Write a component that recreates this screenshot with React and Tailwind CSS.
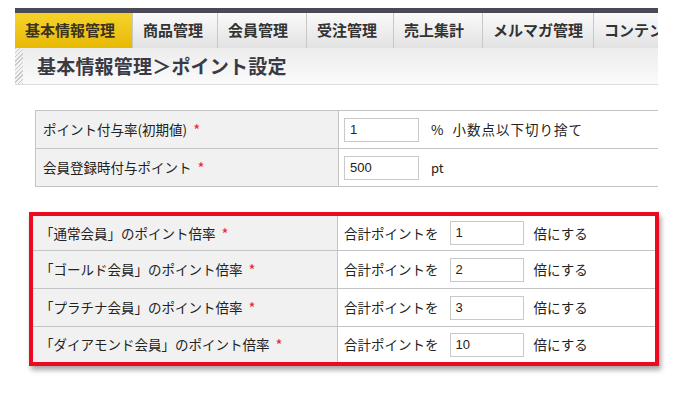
import React from 'react';

const FONT = { fontFamily: '"Noto Sans CJK JP", "Liberation Sans", sans-serif' };

const TABS = [
  { label: '基本情報管理', w: 'w-[117px]', active: true },
  { label: '商品管理', w: 'w-[85px]' },
  { label: '会員管理', w: 'w-[89px]' },
  { label: '受注管理', w: 'w-[87px]' },
  { label: '売上集計', w: 'w-[89px]' },
  { label: 'メルマガ管理', w: 'w-[111px]' },
  { label: 'コンテンツ管理', w: 'w-[110px]' },
];

const RANKS = [
  { name: '通常会員', value: '1', h: 'h-[34px]' },
  { name: 'ゴールド会員', value: '2', h: 'h-[38px]' },
  { name: 'プラチナ会員', value: '3', h: 'h-[38px]' },
  { name: 'ダイアモンド会員', value: '10', h: 'h-[36px]' },
];

function Req() {
  return <span className="ml-[6px] text-[15px] leading-none text-[#e8283a]">*</span>;
}

function TextBox({ value, className = '' }) {
  return (
    <div
      className={`flex items-center h-[24px] border border-[#c9c9c9] bg-white px-[5px] text-[13px] text-[#222] ${className}`}
      style={{ fontFamily: '"Liberation Sans", Arial, sans-serif' }}
    >
      {value}
    </div>
  );
}

export default function App() {
  return (
    <div className="w-[680px] h-[395px] overflow-hidden bg-white text-[#222]" style={FONT}>
      <div className="ml-[15px] w-[643px] pt-[8px]">
        <div className="h-[5px] bg-[#4a4a57]" />

        {/* main tabs */}
        <div className="flex h-[35px] overflow-hidden">
          {TABS.map((t) => (
            <div
              key={t.label}
              className={`${t.w} shrink-0 flex items-center pl-[10px] text-[15px] font-bold whitespace-nowrap ${
                t.active
                  ? 'bg-gradient-to-b from-[#f6d32a] to-[#e7b900] text-[#3a3320]'
                  : 'bg-gradient-to-b from-[#fafafa] to-[#e2e2e2] border-l border-[#c7c7c7] text-[#333]'
              }`}
            >
              {t.label}
            </div>
          ))}
        </div>

        {/* page title */}
        <div className="flex h-[37px] border-b border-[#dcdcdc] bg-gradient-to-b from-[#ececec] to-[#fbfbfb]">
          <div className="w-[8px] bg-[repeating-linear-gradient(135deg,#c9c9c9_0,#c9c9c9_1px,#f2f2f2_1px,#f2f2f2_3px)]" />
          <h1 className="pl-[14px] flex items-center text-[19px] font-bold text-[#3a3a44] tracking-[0.2px]">
            基本情報管理＞ポイント設定
          </h1>
        </div>

        {/* basic point settings */}
        <div className="ml-[20px] mt-[25px] border-l border-[#c4c4c4] text-[13.5px]">
          <div className="flex h-[38px] border-t border-[#c4c4c4]">
            <div className="w-[303px] shrink-0 flex items-center pl-[7px] bg-[#f1f1f1] border-r border-[#c4c4c4]">
              ポイント付与率(初期値)<Req />
            </div>
            <div className="flex items-center pl-[5px]">
              <TextBox value="1" className="w-[75px]" />
              <span className="ml-[12px]">%</span>
              <span className="ml-[9px] tracking-[1px]">小数点以下切り捨て</span>
            </div>
          </div>
          <div className="flex h-[39px] border-y border-[#c4c4c4]">
            <div className="w-[303px] shrink-0 flex items-center pl-[7px] bg-[#f1f1f1] border-r border-[#c4c4c4]">
              会員登録時付与ポイント<Req />
            </div>
            <div className="flex items-center pl-[5px]">
              <TextBox value="500" className="w-[75px]" />
              <span className="ml-[12px] text-[13px]">pt</span>
            </div>
          </div>
        </div>

        {/* rank multipliers */}
        <div className="ml-[14px] mt-[25px] w-[630px] border-4 border-[#ee0a1e] shadow-[2px_4px_5px_rgba(0,0,0,0.35)] text-[13.5px]">
          {RANKS.map((r, i) => (
            <div key={r.name} className={`flex ${r.h} ${i > 0 ? 'border-t border-[#c4c4c4]' : ''}`}>
              <div className="w-[305px] shrink-0 flex items-center pl-[7px] bg-[#f1f1f1] border-r border-[#c4c4c4]">
                「{r.name}」のポイント倍率<Req />
              </div>
              <div className="flex items-center pl-[6px]">
                <span>合計ポイントを</span>
                <TextBox value={r.value} className="ml-[11px] w-[74px]" />
                <span className="ml-[10px]">倍にする</span>
              </div>
            </div>
          ))}
        </div>
      </div>
    </div>
  );
}
